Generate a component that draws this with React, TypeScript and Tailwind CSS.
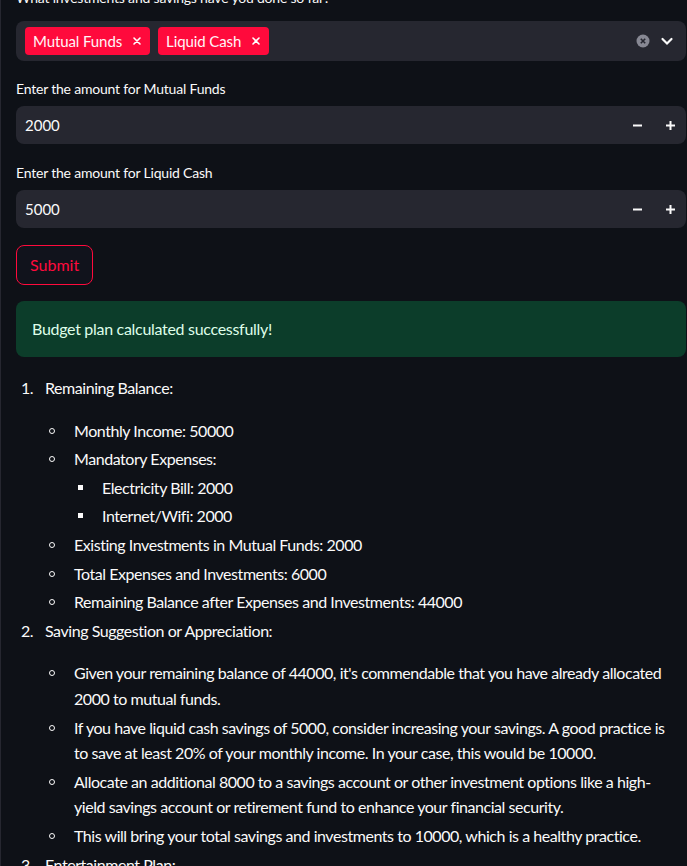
import React from 'react';

const font = { fontFamily: '"Lato", "Noto Sans", sans-serif' };

const Tag: React.FC<{ label: string }> = ({ label }) => (
  <span className="flex items-center h-[28px] px-2 gap-2 rounded-[4px] bg-[#ff0a3c] text-[#fff5f7] text-[15px] tracking-[-0.1px]">
    {label}
    <svg width="10" height="10" viewBox="0 0 10 10" className="ml-0.5">
      <path d="M2 2 L8 8 M8 2 L2 8" stroke="#fff" strokeWidth="1.6" strokeLinecap="round" />
    </svg>
  </span>
);

const NumberInput: React.FC<{ label: string; value: string }> = ({ label, value }) => (
  <div className="flex flex-col">
    <label className="text-[14px] h-[20px] leading-[20px] mb-[7px] tracking-[-0.2px]">{label}</label>
    <div className="h-[38px] rounded-[8px] bg-[#262730] flex items-center pl-[9px] pr-[10px]">
      <span className="flex-1 text-[15px]">{value}</span>
      <svg width="11" height="11" viewBox="0 0 11 11" className="mr-[22px]">
        <path d="M1 5.5 H10" stroke="#fafafa" strokeWidth="2" />
      </svg>
      <svg width="11" height="11" viewBox="0 0 11 11">
        <path d="M1 5.5 H10 M5.5 1 V10" stroke="#fafafa" strokeWidth="2" />
      </svg>
    </div>
  </div>
);

const Circle = () => (
  <span className="absolute left-[-25px] top-[10px] w-[6px] h-[6px] rounded-full border border-[#fafafa]" />
);
const Square = () => <span className="absolute left-[-24px] top-[10px] w-[5px] h-[5px] bg-[#fafafa]" />;

const Sub: React.FC<{ children: React.ReactNode; square?: boolean }> = ({ children, square }) => (
  <li className="relative mt-[3px]">
    {square ? <Square /> : <Circle />}
    {children}
  </li>
);

const Num: React.FC<{ n: number; children: React.ReactNode; first?: boolean }> = ({ n, children, first }) => (
  <li className={first ? 'relative' : 'relative mt-[3px]'}>
    <span className="absolute left-[-24px] top-0">{n}.</span>
    {children}
  </li>
);

export default function App() {
  return (
    <div
      className="w-[687px] h-[866px] overflow-hidden bg-[#0e1117] text-[#fafafa] border-l border-[#262730]"
      style={font}
    >
      <div className="pl-[15px] pr-[1px] mt-[-12px]">
        <div className="text-[14px] h-[20px] leading-[20px] mb-[13px] tracking-[-0.2px]">
          What investments and savings have you done so far?
        </div>
        <div className="h-[40px] rounded-[8px] bg-[#262730] flex items-center pl-[9px] pr-[12px] gap-[8px]">
          <Tag label="Mutual Funds" />
          <Tag label="Liquid Cash" />
          <div className="flex-1" />
          <svg width="14" height="14" viewBox="0 0 14 14" className="mr-[2px]">
            <circle cx="7" cy="7" r="6.5" fill="#878893" />
            <path d="M4.8 4.8 L9.2 9.2 M9.2 4.8 L4.8 9.2" stroke="#262730" strokeWidth="1.6" />
          </svg>
          <svg width="14" height="14" viewBox="0 0 14 14">
            <path d="M2.5 5 L7 9.5 L11.5 5" stroke="#fafafa" strokeWidth="2.2" fill="none" strokeLinecap="round" />
          </svg>
        </div>

        <div className="mt-[18px] flex flex-col gap-[19px]">
          <NumberInput label="Enter the amount for Mutual Funds" value="2000" />
          <NumberInput label="Enter the amount for Liquid Cash" value="5000" />
        </div>

        <button className="mt-[17px] h-[40px] px-[13px] rounded-[8px] border border-[#ff0a3c] text-[#ff0a3c] text-[16px] bg-[#11131c]">
          Submit
        </button>

        <div className="mt-[16px] h-[56px] rounded-[8px] bg-[#0c3d2a] text-[#dffde9] flex items-center px-[16px] text-[16px] tracking-[-0.3px]">
          Budget plan calculated successfully!
        </div>

        <ol className="mt-[18px] pl-[29px] text-[16px] leading-[25.6px] tracking-[-0.45px] list-none">
          <Num n={1} first>
            <p className="mb-[17px]">Remaining Balance:</p>
            <ul className="pl-[29px]">
              <Sub>Monthly Income: 50000</Sub>
              <Sub>
                Mandatory Expenses:
                <ul className="pl-[28px]">
                  <Sub square>Electricity Bill: 2000</Sub>
                  <Sub square>Internet/Wifi: 2000</Sub>
                </ul>
              </Sub>
              <Sub>Existing Investments in Mutual Funds: 2000</Sub>
              <Sub>Total Expenses and Investments: 6000</Sub>
              <Sub>Remaining Balance after Expenses and Investments: 44000</Sub>
            </ul>
          </Num>
          <Num n={2}>
            <p className="mb-[17px]">Saving Suggestion or Appreciation:</p>
            <ul className="pl-[29px] pr-[14px]">
              <Sub>
                Given your remaining balance of 44000, it's commendable that you have already allocated 2000 to
                mutual funds.
              </Sub>
              <Sub>
                If you have liquid cash savings of 5000, consider increasing your savings. A good practice is to save
                at least 20% of your monthly income. In your case, this would be 10000.
              </Sub>
              <Sub>
                Allocate an additional 8000 to a savings account or other investment options like a high-yield
                savings account or retirement fund to enhance your financial security.
              </Sub>
              <Sub>This will bring your total savings and investments to 10000, which is a healthy practice.</Sub>
            </ul>
          </Num>
          <Num n={3}>
            <p>Entertainment Plan:</p>
          </Num>
        </ol>
      </div>
    </div>
  );
}
